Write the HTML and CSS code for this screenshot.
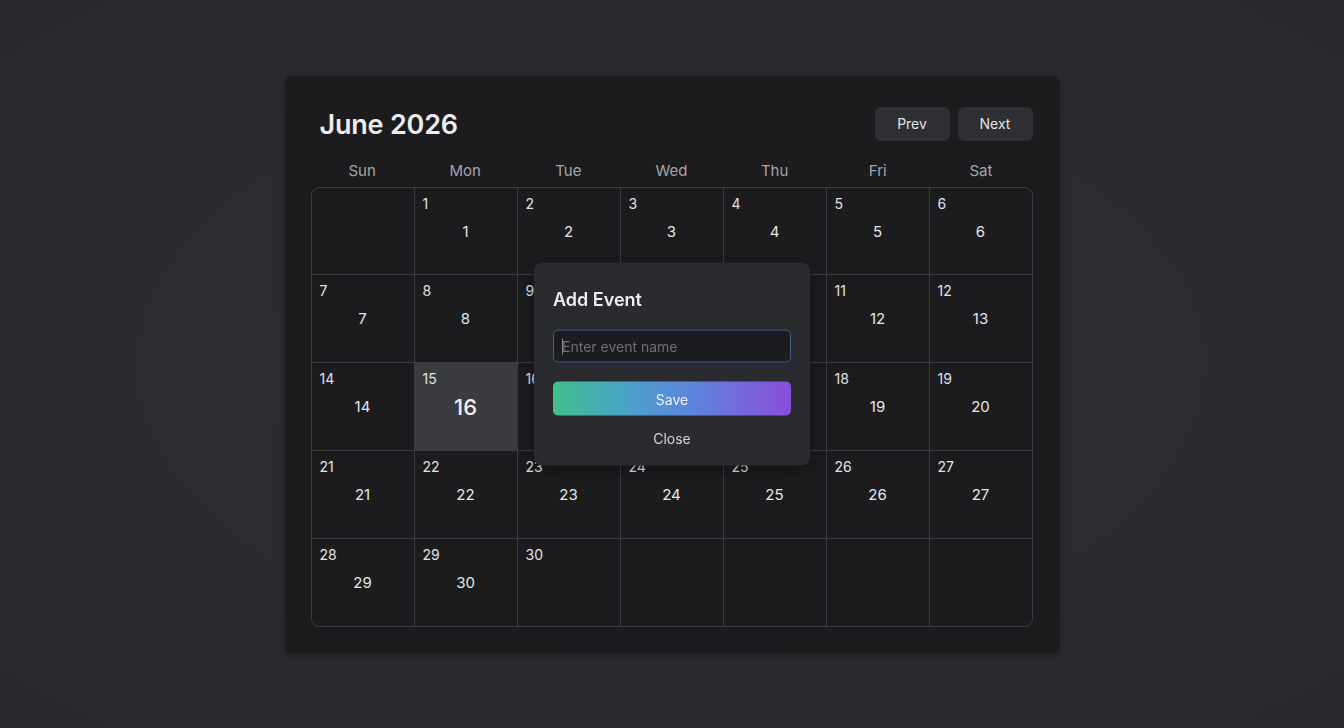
FILE: index.html
```html
<!DOCTYPE html>
<html lang="en">
<head>
<meta charset="utf-8">
<title>June 2026</title>
<link rel="stylesheet" href="styles.css">
</head>
<body>
<div class="card">
  <div class="header">
    <h1 class="title">June 2026</h1>
    <div class="nav">
      <button class="nav-btn">Prev</button>
      <button class="nav-btn">Next</button>
    </div>
  </div>
  <div class="weekdays">
    <div>Sun</div><div>Mon</div><div>Tue</div><div>Wed</div><div>Thu</div><div>Fri</div><div>Sat</div>
  </div>
  <div class="grid">
    <div class="cell"></div>
    <div class="cell"><span class="small">1</span><span class="big">1</span></div>
    <div class="cell"><span class="small">2</span><span class="big">2</span></div>
    <div class="cell"><span class="small">3</span><span class="big">3</span></div>
    <div class="cell"><span class="small">4</span><span class="big">4</span></div>
    <div class="cell"><span class="small">5</span><span class="big">5</span></div>
    <div class="cell"><span class="small">6</span><span class="big">6</span></div>

    <div class="cell"><span class="small">7</span><span class="big">7</span></div>
    <div class="cell"><span class="small">8</span><span class="big">8</span></div>
    <div class="cell"><span class="small">9</span></div>
    <div class="cell"></div>
    <div class="cell"></div>
    <div class="cell"><span class="small">11</span><span class="big">12</span></div>
    <div class="cell"><span class="small">12</span><span class="big">13</span></div>

    <div class="cell"><span class="small">14</span><span class="big">14</span></div>
    <div class="cell selected"><span class="small">15</span><span class="big">16</span></div>
    <div class="cell"><span class="small">16</span></div>
    <div class="cell"></div>
    <div class="cell"></div>
    <div class="cell"><span class="small">18</span><span class="big">19</span></div>
    <div class="cell"><span class="small">19</span><span class="big">20</span></div>

    <div class="cell"><span class="small">21</span><span class="big">21</span></div>
    <div class="cell"><span class="small">22</span><span class="big">22</span></div>
    <div class="cell"><span class="small">23</span><span class="big">23</span></div>
    <div class="cell"><span class="small">24</span><span class="big">24</span></div>
    <div class="cell"><span class="small">25</span><span class="big">25</span></div>
    <div class="cell"><span class="small">26</span><span class="big">26</span></div>
    <div class="cell"><span class="small">27</span><span class="big">27</span></div>

    <div class="cell"><span class="small">28</span><span class="big">29</span></div>
    <div class="cell"><span class="small">29</span><span class="big">30</span></div>
    <div class="cell"><span class="small">30</span></div>
    <div class="cell"></div>
    <div class="cell"></div>
    <div class="cell"></div>
    <div class="cell"></div>
  </div>
</div>

<div class="modal">
  <h2 class="modal-title">Add Event</h2>
  <div class="input-wrap">
    <span class="caret"></span>
    <input class="modal-input" type="text" placeholder="Enter event name">
  </div>
  <button class="save-btn">Save</button>
  <button class="close-btn">Close</button>
</div>
</body>
</html>
```

FILE: styles.css
```css
* { box-sizing: border-box; }

html, body {
  margin: 0;
  height: 100%;
}

body {
  background: radial-gradient(ellipse at center, #2e2f35 0%, #2a2b30 70%, #28292e 100%);
  font-family: Inter, "Noto Sans", "Liberation Sans", sans-serif;
  color: #e6e6e8;
  display: flex;
  align-items: center;
  justify-content: center;
  height: 728px;
  overflow: hidden;
}

.card {
  width: 775px;
  height: 577px;
  background: #1c1c1f;
  border-radius: 6px;
  padding: 31px 27px 26px 26px;
  display: flex;
  flex-direction: column;
  box-shadow: 0 2px 10px rgba(0,0,0,0.25);
}

.header {
  display: flex;
  align-items: center;
  justify-content: space-between;
  height: 34px;
}

.title {
  margin: 3px 0 0 9px;
  font-size: 27px;
  font-weight: 600;
  letter-spacing: -0.2px;
  color: #ededee;
  line-height: 34px;
}

.nav {
  display: flex;
  gap: 8px;
}

.nav-btn {
  width: 75px;
  height: 34px;
  background: #2e2f33;
  border: none;
  border-radius: 6px;
  color: #e4e4e6;
  font-family: inherit;
  font-size: 14px;
  padding: 0;
}

.weekdays {
  display: grid;
  grid-template-columns: repeat(7, 1fr);
  margin-top: 17px;
  margin-bottom: 3px;
  height: 26px;
  line-height: 26px;
  font-size: 15px;
  color: #a4a5aa;
  text-align: center;
}

.grid {
  flex: 1;
  display: grid;
  grid-template-columns: repeat(7, 1fr);
  grid-template-rows: repeat(5, 1fr);
  gap: 1px;
  background: #3a3b40;
  border: 1px solid #3a3b40;
  border-radius: 8px;
  overflow: hidden;
}

.cell {
  background: #1c1c1f;
  display: flex;
  flex-direction: column;
  padding: 7px 0 0 8px;
}

.cell.selected {
  background: #3a3b40;
}

.small {
  font-size: 14px;
  line-height: 18px;
  height: 18px;
  color: #e2e2e4;
}

.big {
  margin-top: 7px;
  height: 24px;
  line-height: 24px;
  font-size: 15px;
  text-align: center;
  padding-right: 8px;
  color: #e6e6e8;
}

.selected .big {
  font-size: 22px;
  font-weight: 500;
  color: #f0f0f2;
}

.modal {
  position: fixed;
  left: 50%;
  top: 50%;
  transform: translate(-50%, -50%);
  width: 276px;
  height: 203px;
  background: #2a2b2f;
  border-radius: 8px;
  padding: 26px 19px 18px 19px;
  display: flex;
  flex-direction: column;
  box-shadow: 0 4px 16px rgba(0,0,0,0.35);
}

.modal-title {
  margin: 0;
  font-size: 18px;
  font-weight: 600;
  line-height: 22px;
  color: #efeff0;
}

.input-wrap {
  position: relative;
  margin-top: 19px;
  height: 33px;
}

.caret {
  position: absolute;
  left: 9px;
  top: 9px;
  width: 1px;
  height: 16px;
  background: #8a8b90;
}

.modal-input {
  height: 33px;
  width: 100%;
  background: #1b1c1f;
  border: 1.5px solid #3b5d90;
  border-radius: 5px;
  padding: 0 8px;
  font-family: inherit;
  font-size: 14px;
  color: #e6e6e8;
  outline: none;
}

.modal-input::placeholder {
  color: #6e6f74;
}

.caret { z-index: 1; }

.save-btn {
  margin-top: 19px;
  height: 34px;
  width: 100%;
  border: none;
  border-radius: 5px;
  background: linear-gradient(90deg, #3fbf8d 0%, #4aa3c9 30%, #5f83de 60%, #8a4cdc 100%);
  color: #eef0f6;
  font-family: inherit;
  font-size: 14px;
  padding: 0;
}

.close-btn {
  margin-top: 14px;
  height: 18px;
  line-height: 18px;
  background: none;
  border: none;
  color: #d2d2d5;
  font-family: inherit;
  font-size: 14px;
  padding: 0;
}
```
